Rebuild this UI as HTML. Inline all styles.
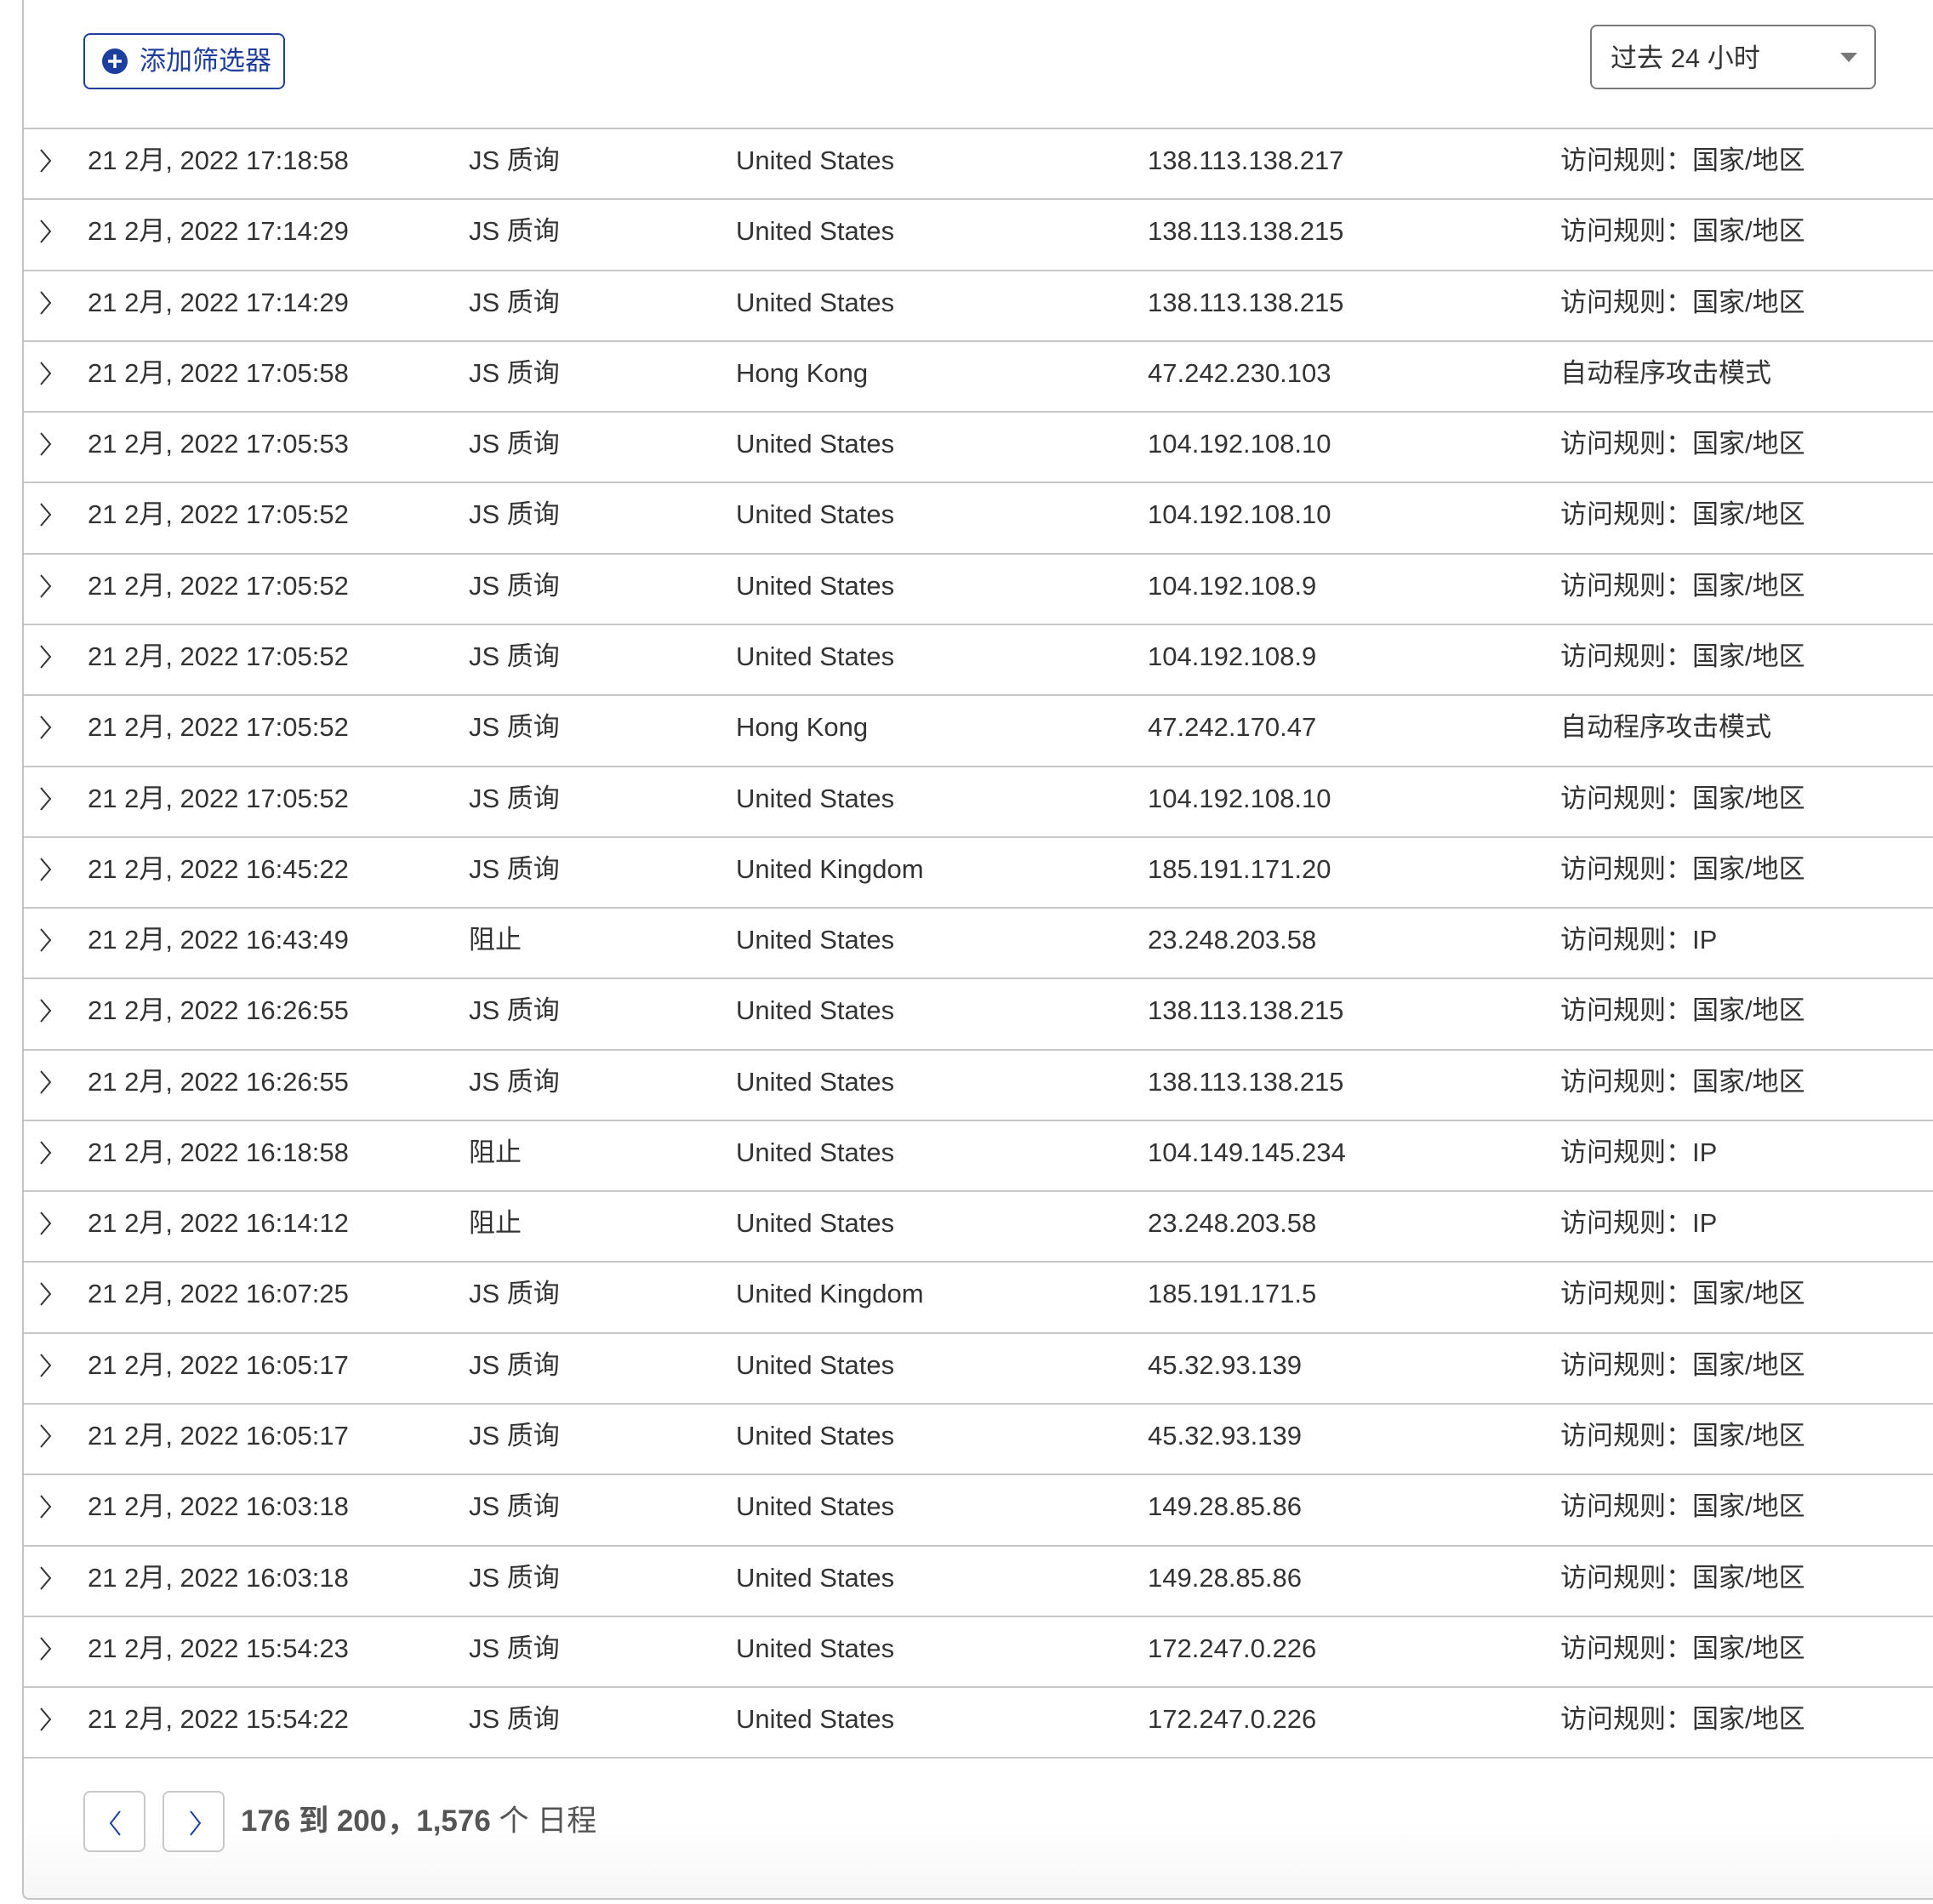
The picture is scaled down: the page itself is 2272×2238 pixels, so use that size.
<!DOCTYPE html>
<html><head><meta charset="utf-8"><style>
*{margin:0;padding:0;box-sizing:border-box}
body{width:2272px;height:2238px;background:#fff;position:relative;overflow:hidden;font-family:"Liberation Sans","Noto Sans CJK SC",sans-serif;color:#333}
.frame{position:absolute;left:26px;top:-10px;width:2260px;height:2243px;border-left:2px solid #c4c4c4;border-bottom:2px solid #c4c4c4;border-bottom-left-radius:8px;background:linear-gradient(#fff 2150px,#f6f6f6 2243px)}
.btn{position:absolute;left:98px;top:39px;width:237px;height:66px;border:2px solid #1f3f9f;border-radius:8px;color:#1f3f9f;font-size:31px;line-height:62px;padding-left:64px}
.btn svg{position:absolute;left:20px;top:16px}
.sel{position:absolute;left:1869px;top:29px;width:336px;height:76px;border:2px solid #7a7a7a;border-radius:8px;font-size:31px;line-height:76px;padding-left:22px;color:#333}
.sel .tri{position:absolute;right:20px;top:31px;width:0;height:0;border-left:10px solid transparent;border-right:10px solid transparent;border-top:11px solid #777}
.line{position:absolute;left:28px;right:0;height:2px;background:#c8c8c8}
.row{position:absolute;left:28px;right:0;height:83px;font-size:31px;line-height:76px;white-space:nowrap}
.row span{position:absolute;top:0}
.row svg{position:absolute;left:16px;top:22px}
.pg{position:absolute;top:2105px;width:73px;height:72px;border:2px solid #c8c8c8;border-radius:8px;background:#fff}
.pg svg{position:absolute;left:24px;top:20px}
.ft{position:absolute;left:283px;top:2105px;line-height:72px;font-size:35px;color:#555}
</style></head><body>
<div class="frame"></div>
<div class="btn"><svg width="30" height="30" viewBox="0 0 30 30"><circle cx="15" cy="15" r="15" fill="#1f3f9f"/><path d="M15 7v16M7 15h16" stroke="#fff" stroke-width="3.5"/></svg>添加筛选器</div>
<div class="sel">过去 24 小时<div class="tri"></div></div>
<div id="rows"></div>
<div class="pg" style="left:98px"><svg width="24" height="32" viewBox="0 0 24 32"><path d="M17 2 6 16l11 14" fill="none" stroke="#1f3f9f" stroke-width="2"/></svg></div>
<div class="pg" style="left:191px"><svg width="24" height="32" viewBox="0 0 24 32"><path d="M7 2l11 14-11 14" fill="none" stroke="#1f3f9f" stroke-width="2"/></svg></div>
<div class="ft"><b>176 到 200，1,576</b> 个 日程</div>
<script>
(function(){
var d=[
["17:18:58","JS 质询","United States","138.113.138.217",0],
["17:14:29","JS 质询","United States","138.113.138.215",0],
["17:14:29","JS 质询","United States","138.113.138.215",0],
["17:05:58","JS 质询","Hong Kong","47.242.230.103",1],
["17:05:53","JS 质询","United States","104.192.108.10",0],
["17:05:52","JS 质询","United States","104.192.108.10",0],
["17:05:52","JS 质询","United States","104.192.108.9",0],
["17:05:52","JS 质询","United States","104.192.108.9",0],
["17:05:52","JS 质询","Hong Kong","47.242.170.47",1],
["17:05:52","JS 质询","United States","104.192.108.10",0],
["16:45:22","JS 质询","United Kingdom","185.191.171.20",0],
["16:43:49","阻止","United States","23.248.203.58",2],
["16:26:55","JS 质询","United States","138.113.138.215",0],
["16:26:55","JS 质询","United States","138.113.138.215",0],
["16:18:58","阻止","United States","104.149.145.234",2],
["16:14:12","阻止","United States","23.248.203.58",2],
["16:07:25","JS 质询","United Kingdom","185.191.171.5",0],
["16:05:17","JS 质询","United States","45.32.93.139",0],
["16:05:17","JS 质询","United States","45.32.93.139",0],
["16:03:18","JS 质询","United States","149.28.85.86",0],
["16:03:18","JS 质询","United States","149.28.85.86",0],
["15:54:23","JS 质询","United States","172.247.0.226",0],
["15:54:22","JS 质询","United States","172.247.0.226",0]];
var R=["访问规则：国家/地区","自动程序攻击模式","访问规则：IP"];
var h="",t0=150,step=83.28;
h+='<div class="line" style="top:'+t0+'px"></div>';
for(var i=0;i<d.length;i++){var r=d[i];var y=t0+i*step;
h+='<div class="row" style="top:'+Math.round(y+1)+'px"><svg width="20" height="32" viewBox="0 0 20 32"><path d="M4 3l11 13L4 29" fill="none" stroke="#333" stroke-width="2"/></svg><span style="left:75px">21 2月, 2022 '+r[0]+'</span><span style="left:523px">'+r[1]+'</span><span style="left:837px">'+r[2]+'</span><span style="left:1321px">'+r[3]+'</span><span style="left:1806px">'+R[r[4]]+'</span></div>';
h+='<div class="line" style="top:'+Math.round(y+step)+'px"></div>';}
document.getElementById("rows").innerHTML=h;
})();
</script>
</body></html>
